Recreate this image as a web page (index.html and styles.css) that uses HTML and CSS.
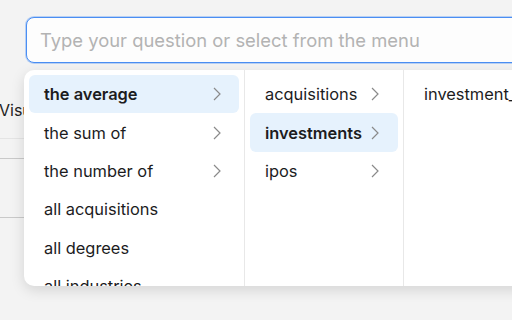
FILE: index.html
```html
<!DOCTYPE html>
<html lang="en">
<head>
    <meta charset="UTF-8">
    <meta name="viewport" content="width=device-width, initial-scale=1.0">
    <title>Ask</title>
    <link rel="stylesheet" href="styles.css">
</head>
<body>
    <div class="page">
        <div class="page-label">Visualize</div>
        <div class="page-row faint"></div>
        <div class="page-row"></div>
        <div class="page-row tall"></div>
    </div>

    <div class="ask">
        <div class="ask-input">
            <input type="text" placeholder="Type your question or select from the menu">
        </div>
        <div class="menu">
            <ul class="col col1">
                <li class="on"><b>the average</b><svg class="chev" viewBox="0 0 8 14"><polyline points="1,1 7,7 1,13"/></svg></li>
                <li>the sum of<svg class="chev" viewBox="0 0 8 14"><polyline points="1,1 7,7 1,13"/></svg></li>
                <li>the number of<svg class="chev" viewBox="0 0 8 14"><polyline points="1,1 7,7 1,13"/></svg></li>
                <li>all acquisitions</li>
                <li>all degrees</li>
                <li>all industries</li>
            </ul>
            <ul class="col col2">
                <li>acquisitions<svg class="chev" viewBox="0 0 8 14"><polyline points="1,1 7,7 1,13"/></svg></li>
                <li class="on"><b>investments</b><svg class="chev" viewBox="0 0 8 14"><polyline points="1,1 7,7 1,13"/></svg></li>
                <li>ipos<svg class="chev" viewBox="0 0 8 14"><polyline points="1,1 7,7 1,13"/></svg></li>
            </ul>
            <ul class="col col3">
                <li>investment_</li>
            </ul>
        </div>
    </div>
</body>
</html>
```

FILE: styles.css
```css
*{
    margin:0;
    padding:0;
    box-sizing:border-box;
}
body{
    width:512px;
    height:320px;
    overflow:hidden;
    position:relative;
    background:#f3f3f3;
    font-family:Inter, "Liberation Sans", sans-serif;
    color:#1c1c1e;
}
.page{
    display:flex;
    flex-direction:column;
    padding-top:98px;
}
.page-label{
    height:28px;
    line-height:24px;
    font-size:16px;
    margin-left:-1px;
    color:#222;
}
.page-row{
    height:20px;
    border-top:1px solid #c9c9c9;
}
.page-row.faint{
    border-top-color:#e4e4e4;
    margin-top:12px;
}
.page-row.tall{
    height:80px;
    margin-top:39px;
}
.ask{
    position:absolute;
    left:24px;
    top:17px;
    width:520px;
}
.ask-input{
    margin-left:2px;
    height:46px;
    border:1px solid #4a8ef3;
    border-radius:8px;
    box-shadow:0 0 0 1px rgba(74,142,243,0.35);
    background:#fdfdfd;
    display:flex;
    align-items:center;
    padding-left:13px;
}
.ask-input input{
    border:none;
    outline:none;
    background:transparent;
    width:100%;
    font-family:inherit;
    font-size:18.4px;
    color:#222;
}
.ask-input input::placeholder{
    color:#b3b3b3;
}
.menu{
    margin-top:7px;
    height:216px;
    background:#fff;
    border-radius:10px 0 0 10px;
    box-shadow:0 4px 14px rgba(0,0,0,0.13);
    display:flex;
    overflow:hidden;
}
.col{
    flex:none;
    list-style:none;
    padding:5px;
    border-right:1px solid #e8e8e8;
}
.col1{
    width:221px;
}
.col2{
    width:159px;
}
.col3{
    flex:1;
    border-right:none;
}
.col li{
    height:38.4px;
    display:flex;
    align-items:center;
    justify-content:space-between;
    padding:0 18px 0 15px;
    font-size:16.4px;
    border-radius:6px;
    white-space:nowrap;
}
.col2 li{
    padding-right:19px;
}
.col li b{
    font-weight:600;
}
.col li.on{
    background:#e6f2fd;
}
.chev{
    width:8px;
    height:14px;
    flex:none;
}
.chev polyline{
    fill:none;
    stroke:#8a8a8a;
    stroke-width:1.2;
}
```
